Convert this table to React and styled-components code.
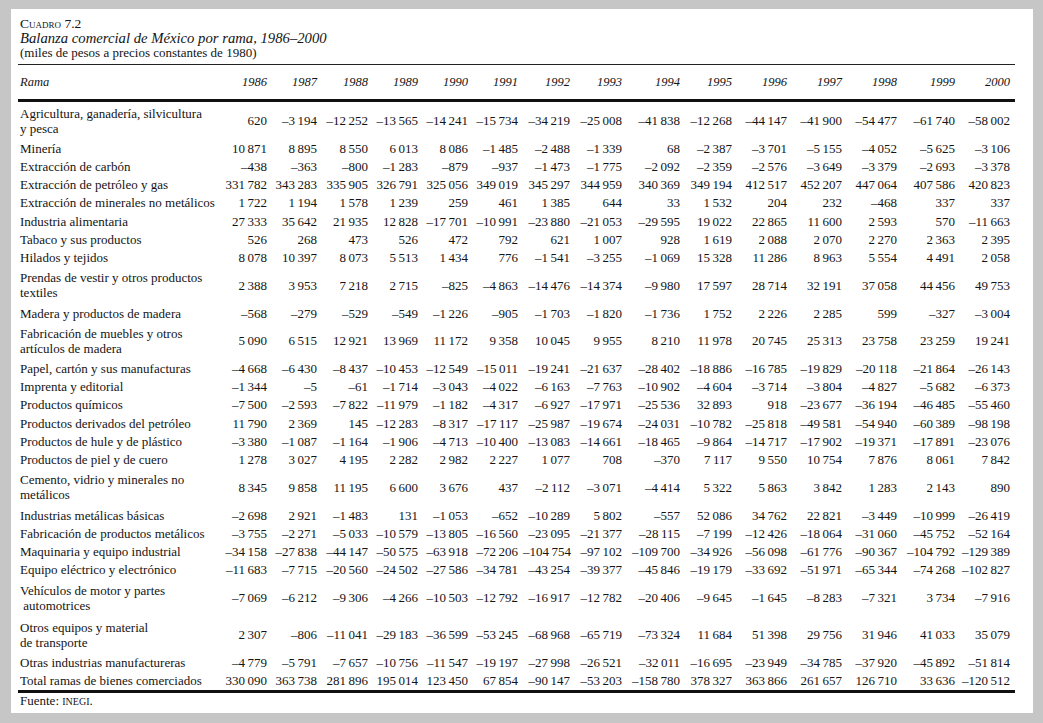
import React from 'react'
import styled, { createGlobalStyle } from 'styled-components'

const GlobalStyle = createGlobalStyle`
  body {
    margin: 0;
    background: #c6c6c6;
    font-family: "Liberation Serif", "Times New Roman", serif;
    color: #141414;
  }
`

const Page = styled.div`
  box-sizing: border-box;
  width: 1022px;
  height: 704px;
  margin: 9px 10px 0 11px;
  padding: 8px 18px 0 7px;
  background: #fff;
`

const Caption = styled.div`
  padding-left: 2px;
`

const Label = styled.div`
  font-size: 13.5px;
  line-height: 14px;
  font-variant: small-caps;
`

const Title = styled.div`
  font-size: 14.7px;
  line-height: 14px;
  font-style: italic;
`

const Subtitle = styled.div`
  font-size: 13px;
  line-height: 14px;
  margin-top: 1px;
`

const Table = styled.table`
  width: 997px;
  margin-top: 4px;
  border-collapse: collapse;
  table-layout: fixed;
  font-size: 13px;
`

const Head = styled.thead`
  border-top: 1px solid #222;
  border-bottom: 3px solid #111;
`

const Body = styled.tbody`
  border-bottom: 3px solid #111;
`

const HeadCell = styled.th`
  padding: 10px ${(p) => (p.$label ? '0' : '5px')} 9px ${(p) => (p.$label ? '2px' : '0')};
  font-weight: normal;
  font-style: italic;
  font-size: 12.5px;
  line-height: 15px;
  text-align: ${(p) => (p.$label ? 'left' : 'right')};
`

const Cell = styled.td`
  padding: ${(p) => (p.$tall ? '3.5px' : '1.65px')} 5px ${(p) => (p.$tall ? '3.5px' : '1.65px')} 0;
  line-height: 15px;
  text-align: right;
  vertical-align: middle;
  white-space: nowrap;
`

const NameCell = styled(Cell)`
  padding-left: 2px;
  padding-right: 0;
  text-align: left;
`

const Source = styled.div`
  padding: 2px 0 0 2px;
  font-size: 13px;
  line-height: 12px;
`

const Caps = styled.span`
  font-variant: small-caps;
  font-size: 14px;
`

const widths = [204, 50, 50, 51, 50, 50, 50, 52, 52, 58, 52, 55, 55, 55, 58, 55]
const years = [1986, 1987, 1988, 1989, 1990, 1991, 1992, 1993, 1994, 1995, 1996, 1997, 1998, 1999, 2000]

const rows = [
  [['Agricultura, ganadería, silvicultura', 'y pesca'], '620|–3 194|–12 252|–13 565|–14 241|–15 734|–34 219|–25 008|–41 838|–12 268|–44 147|–41 900|–54 477|–61 740|–58 002'],
  [['Minería'], '10 871|8 895|8 550|6 013|8 086|–1 485|–2 488|–1 339|68|–2 387|–3 701|–5 155|–4 052|–5 625|–3 106'],
  [['Extracción de carbón'], '–438|–363|–800|–1 283|–879|–937|–1 473|–1 775|–2 092|–2 359|–2 576|–3 649|–3 379|–2 693|–3 378'],
  [['Extracción de petróleo y gas'], '331 782|343 283|335 905|326 791|325 056|349 019|345 297|344 959|340 369|349 194|412 517|452 207|447 064|407 586|420 823'],
  [['Extracción de minerales no metálicos'], '1 722|1 194|1 578|1 239|259|461|1 385|644|33|1 532|204|232|–468|337|337'],
  [['Industria alimentaria'], '27 333|35 642|21 935|12 828|–17 701|–10 991|–23 880|–21 053|–29 595|19 022|22 865|11 600|2 593|570|–11 663'],
  [['Tabaco y sus productos'], '526|268|473|526|472|792|621|1 007|928|1 619|2 088|2 070|2 270|2 363|2 395'],
  [['Hilados y tejidos'], '8 078|10 397|8 073|5 513|1 434|776|–1 541|–3 255|–1 069|15 328|11 286|8 963|5 554|4 491|2 058'],
  [['Prendas de vestir y otros productos', 'textiles'], '2 388|3 953|7 218|2 715|–825|–4 863|–14 476|–14 374|–9 980|17 597|28 714|32 191|37 058|44 456|49 753'],
  [['Madera y productos de madera'], '–568|–279|–529|–549|–1 226|–905|–1 703|–1 820|–1 736|1 752|2 226|2 285|599|–327|–3 004'],
  [['Fabricación de muebles y otros', 'artículos de madera'], '5 090|6 515|12 921|13 969|11 172|9 358|10 045|9 955|8 210|11 978|20 745|25 313|23 758|23 259|19 241'],
  [['Papel, cartón y sus manufacturas'], '–4 668|–6 430|–8 437|–10 453|–12 549|–15 011|–19 241|–21 637|–28 402|–18 886|–16 785|–19 829|–20 118|–21 864|–26 143'],
  [['Imprenta y editorial'], '–1 344|–5|–61|–1 714|–3 043|–4 022|–6 163|–7 763|–10 902|–4 604|–3 714|–3 804|–4 827|–5 682|–6 373'],
  [['Productos químicos'], '–7 500|–2 593|–7 822|–11 979|–1 182|–4 317|–6 927|–17 971|–25 536|32 893|918|–23 677|–36 194|–46 485|–55 460'],
  [['Productos derivados del petróleo'], '11 790|2 369|145|–12 283|–8 317|–17 117|–25 987|–19 674|–24 031|–10 782|–25 818|–49 581|–54 940|–60 389|–98 198'],
  [['Productos de hule y de plástico'], '–3 380|–1 087|–1 164|–1 906|–4 713|–10 400|–13 083|–14 661|–18 465|–9 864|–14 717|–17 902|–19 371|–17 891|–23 076'],
  [['Productos de piel y de cuero'], '1 278|3 027|4 195|2 282|2 982|2 227|1 077|708|–370|7 117|9 550|10 754|7 876|8 061|7 842'],
  [['Cemento, vidrio y minerales no', 'metálicos'], '8 345|9 858|11 195|6 600|3 676|437|–2 112|–3 071|–4 414|5 322|5 863|3 842|1 283|2 143|890'],
  [['Industrias metálicas básicas'], '–2 698|2 921|–1 483|131|–1 053|–652|–10 289|5 802|–557|52 086|34 762|22 821|–3 449|–10 999|–26 419'],
  [['Fabricación de productos metálicos'], '–3 755|–2 271|–5 033|–10 579|–13 805|–16 560|–23 095|–21 377|–28 115|–7 199|–12 426|–18 064|–31 060|–45 752|–52 164'],
  [['Maquinaria y equipo industrial'], '–34 158|–27 838|–44 147|–50 575|–63 918|–72 206|–104 754|–97 102|–109 700|–34 926|–56 098|–61 776|–90 367|–104 792|–129 389'],
  [['Equipo eléctrico y electrónico'], '–11 683|–7 715|–20 560|–24 502|–27 586|–34 781|–43 254|–39 377|–45 846|–19 179|–33 692|–51 971|–65 344|–74 268|–102 827'],
  [['Vehículos de motor y partes', '\u00a0automotrices'], '–7 069|–6 212|–9 306|–4 266|–10 503|–12 792|–16 917|–12 782|–20 406|–9 645|–1 645|–8 283|–7 321|3 734|–7 916'],
  [['Otros equipos y material', 'de transporte'], '2 307|–806|–11 041|–29 183|–36 599|–53 245|–68 968|–65 719|–73 324|11 684|51 398|29 756|31 946|41 033|35 079'],
  [['Otras industrias manufactureras'], '–4 779|–5 791|–7 657|–10 756|–11 547|–19 197|–27 998|–26 521|–32 011|–16 695|–23 949|–34 785|–37 920|–45 892|–51 814'],
  [['Total ramas de bienes comerciados'], '330 090|363 738|281 896|195 014|123 450|67 854|–90 147|–53 203|–158 780|378 327|363 866|261 657|126 710|33 636|–120 512'],
]

// thin space between thousands, like the printed table
const fmt = (v) => v.replace(/ /g, '\u2009')

export default function App() {
  return (
    <>
      <GlobalStyle />
      <Page>
        <Caption>
          <Label>Cuadro 7.2</Label>
          <Title>Balanza comercial de México por rama, 1986–2000</Title>
          <Subtitle>(miles de pesos a precios constantes de 1980)</Subtitle>
        </Caption>
        <Table>
          <colgroup>
            {widths.map((w, i) => (
              <col key={i} style={{ width: w }} />
            ))}
          </colgroup>
          <Head>
            <tr>
              <HeadCell $label>Rama</HeadCell>
              {years.map((y) => (
                <HeadCell key={y}>{y}</HeadCell>
              ))}
            </tr>
          </Head>
          <Body>
            {rows.map(([name, vals]) => {
              const tall = name.length > 1
              return (
                <tr key={name[0]}>
                  <NameCell $tall={tall}>
                    {name.map((line, i) => (
                      <React.Fragment key={i}>
                        {i > 0 && <br />}
                        {line}
                      </React.Fragment>
                    ))}
                  </NameCell>
                  {vals.split('|').map((v, i) => (
                    <Cell key={i} $tall={tall}>
                      {fmt(v)}
                    </Cell>
                  ))}
                </tr>
              )
            })}
          </Body>
        </Table>
        <Source>
          Fuente: <Caps>inegi</Caps>.
        </Source>
      </Page>
    </>
  )
}
